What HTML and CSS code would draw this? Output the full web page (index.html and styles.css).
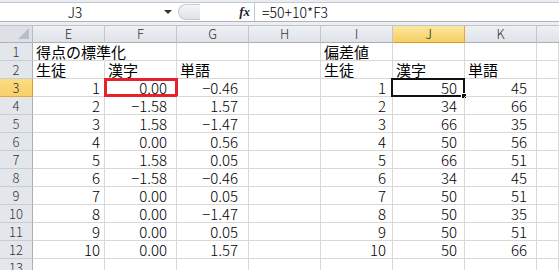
FILE: index.html
```html
<!DOCTYPE html>
<html lang="ja">
<head>
<meta charset="utf-8">
<link rel="stylesheet" href="styles.css">
</head>
<body>
<div class="app">
  <div class="topline"></div>
  <div class="fbar">
    <div class="namebox"><span class="name">J3</span><span class="dd"></span></div>
    <div class="mid"><span class="pill"></span><span class="fx">fx</span></div>
    <div class="formula">=50+10*F3</div>
  </div>
  <div class="gap"></div>
  <div class="sheet">
    <div class="corner"><span class="tri"></span></div>
    <div class="ch">E</div><div class="ch">F</div><div class="ch">G</div><div class="ch">H</div><div class="ch">I</div><div class="ch sel">J</div><div class="ch">K</div><div class="ch last"></div>

    <div class="rh">1</div><div class="c t ov">得点の標準化</div><div class="c"></div><div class="c"></div><div class="c"></div><div class="c t">偏差値</div><div class="c"></div><div class="c"></div><div class="c"></div>
    <div class="rh">2</div><div class="c t">生徒</div><div class="c t">漢字</div><div class="c t">単語</div><div class="c"></div><div class="c t">生徒</div><div class="c t">漢字</div><div class="c t">単語</div><div class="c"></div>

    <div class="rh sel">3</div><div class="c e">1</div><div class="c f">0.00<span class="redbox"></span></div><div class="c g">−0.46</div><div class="c"></div><div class="c i">1</div><div class="c j">50<span class="selbox"><span class="handle"></span></span></div><div class="c k">45</div><div class="c"></div>
    <div class="rh">4</div><div class="c e">2</div><div class="c f">−1.58</div><div class="c g">1.57</div><div class="c"></div><div class="c i">2</div><div class="c j">34</div><div class="c k">66</div><div class="c"></div>
    <div class="rh">5</div><div class="c e">3</div><div class="c f">1.58</div><div class="c g">−1.47</div><div class="c"></div><div class="c i">3</div><div class="c j">66</div><div class="c k">35</div><div class="c"></div>
    <div class="rh">6</div><div class="c e">4</div><div class="c f">0.00</div><div class="c g">0.56</div><div class="c"></div><div class="c i">4</div><div class="c j">50</div><div class="c k">56</div><div class="c"></div>
    <div class="rh">7</div><div class="c e">5</div><div class="c f">1.58</div><div class="c g">0.05</div><div class="c"></div><div class="c i">5</div><div class="c j">66</div><div class="c k">51</div><div class="c"></div>
    <div class="rh">8</div><div class="c e">6</div><div class="c f">−1.58</div><div class="c g">−0.46</div><div class="c"></div><div class="c i">6</div><div class="c j">34</div><div class="c k">45</div><div class="c"></div>
    <div class="rh">9</div><div class="c e">7</div><div class="c f">0.00</div><div class="c g">0.05</div><div class="c"></div><div class="c i">7</div><div class="c j">50</div><div class="c k">51</div><div class="c"></div>
    <div class="rh">10</div><div class="c e">8</div><div class="c f">0.00</div><div class="c g">−1.47</div><div class="c"></div><div class="c i">8</div><div class="c j">50</div><div class="c k">35</div><div class="c"></div>
    <div class="rh">11</div><div class="c e">9</div><div class="c f">0.00</div><div class="c g">0.05</div><div class="c"></div><div class="c i">9</div><div class="c j">50</div><div class="c k">51</div><div class="c"></div>
    <div class="rh">12</div><div class="c e">10</div><div class="c f">0.00</div><div class="c g">1.57</div><div class="c"></div><div class="c i">10</div><div class="c j">50</div><div class="c k">66</div><div class="c"></div>
    <div class="rh">13</div><div class="c"></div><div class="c"></div><div class="c"></div><div class="c"></div><div class="c"></div><div class="c"></div><div class="c"></div><div class="c"></div>
  </div>
</div>
</body>
</html>
```

FILE: styles.css
```css
* { box-sizing: border-box; margin: 0; padding: 0; }
html, body { width: 559px; height: 270px; overflow: hidden; background: #fff; }
body { font-family: "Noto Sans CJK JP", sans-serif; color: #000; }

.app { width: 559px; height: 270px; display: flex; flex-direction: column; }

.topline { height: 2px; background: #e9ecf0; }

.fbar { height: 19px; display: flex; border-top: 1px solid #c3c8cf; background: #fff; }
.namebox { width: 176px; display: flex; align-items: center; }
.name { width: 150px; text-align: center; font-size: 14px; line-height: 18px; font-weight: 300; }
.dd { width: 0; height: 0; border-left: 4px solid transparent; border-right: 4px solid transparent; border-top: 4px solid #333; margin-left: 14px; }
.mid { width: 78px; display: flex; align-items: center; justify-content: space-between; background: #fff; padding-right: 4px; }
.pill { width: 22px; height: 16px; border: 1px solid #c6cbd2; border-right: none; border-radius: 8px 0 0 8px; background: linear-gradient(#f4f5f7, #dfe2e6); margin-left: 2px; }
.fx { font-family: "Liberation Serif", serif; font-style: italic; font-weight: bold; font-size: 13px; color: #222; }
.formula { flex: 1; border-left: 1px solid #c3c8cf; padding-left: 7px; font-size: 14px; line-height: 18px; font-weight: 300; }

.gap { height: 5px; background: #eceef1; border-top: 1px solid #aeb4bc; border-bottom: 1px solid #bfc4cb; }

.sheet { flex: 1; display: grid; grid-template-columns: 33px repeat(7, 72px) 1fr; grid-template-rows: 17px repeat(12, 18px) 1fr; overflow: hidden; }

.corner { background: #dde1e7; border-right: 1px solid #b6bcc5; border-bottom: 1px solid #aab1ba; position: relative; }
.tri { position: absolute; right: 3px; bottom: 3px; width: 0; height: 0; border-left: 11px solid transparent; border-bottom: 11px solid #b9bec6; }

.ch { background: linear-gradient(#eef0f3, #dfe3e8); border-right: 1px solid #c2c7ce; border-bottom: 1px solid #a9b0b9; text-align: center; font-size: 13px; line-height: 16px; color: #333; font-weight: 300; }
.ch.sel { background: linear-gradient(#fbe6a2, #f5cf63); border-right: 1px solid #e1a640; border-bottom: 1px solid #e39b27; color: #222; }
.ch.last { border-right: none; }

.rh { background: #e3e7ec; border-right: 1px solid #a9b0b9; border-bottom: 1px solid #c8cdd4; text-align: center; font-size: 13px; line-height: 17px; color: #333; font-weight: 300; }
.rh.sel { background: linear-gradient(#fbdd82, #f7d06a); border-bottom: 1px solid #e7a93c; border-right: 1px solid #e39b27; }

.c { border-right: 1px solid #d8d8d8; border-bottom: 1px solid #d8d8d8; font-size: 15px; line-height: 17px; font-weight: 300; white-space: nowrap; position: relative; text-align: right; }
.c.t { text-align: left; padding-left: 3px; font-weight: 400; }
.c.ov { overflow: visible; border-right-color: transparent; z-index: 1; }
.c.e { padding-right: 4px; }
.c.f { padding-right: 9px; }
.c.g { padding-right: 10px; }
.c.i { padding-right: 6px; }
.c.j { padding-right: 7px; }
.c.k { padding-right: 9px; }

.redbox { position: absolute; left: -1px; top: -1px; right: -2px; bottom: -1px; border: 3px solid #e8202a; }
.selbox { position: absolute; left: -2px; top: -1px; right: -1px; bottom: -1px; border: 2px solid #111; }
.handle { position: absolute; right: -4px; bottom: -4px; width: 6px; height: 6px; background: #111; border: 1px solid #fff; }
```
